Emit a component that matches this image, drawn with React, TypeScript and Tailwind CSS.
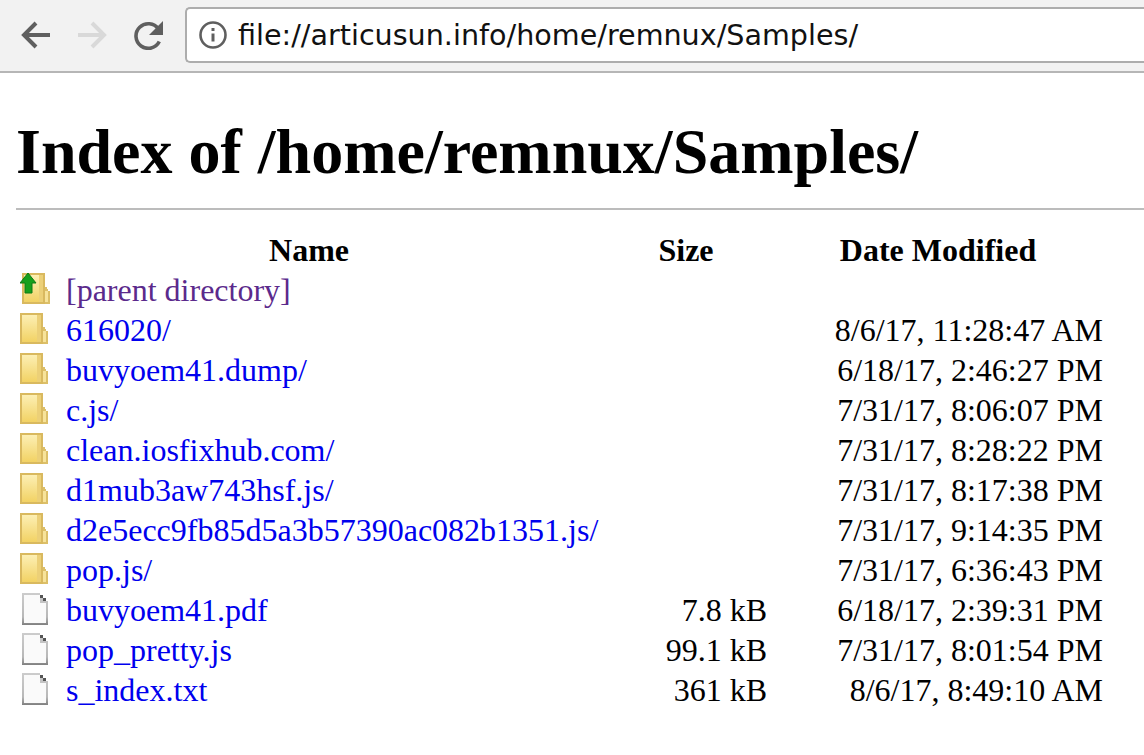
import { Fragment } from "react";

interface FileRow {
  name: string;
  kind: "parent" | "folder" | "file";
  size?: string;
  date?: string;
}

const ROWS: FileRow[] = [
  { name: "[parent directory]", kind: "parent" },
  { name: "616020/", kind: "folder", date: "8/6/17, 11:28:47 AM" },
  { name: "buvyoem41.dump/", kind: "folder", date: "6/18/17, 2:46:27 PM" },
  { name: "c.js/", kind: "folder", date: "7/31/17, 8:06:07 PM" },
  { name: "clean.iosfixhub.com/", kind: "folder", date: "7/31/17, 8:28:22 PM" },
  { name: "d1mub3aw743hsf.js/", kind: "folder", date: "7/31/17, 8:17:38 PM" },
  { name: "d2e5ecc9fb85d5a3b57390ac082b1351.js/", kind: "folder", date: "7/31/17, 9:14:35 PM" },
  { name: "pop.js/", kind: "folder", date: "7/31/17, 6:36:43 PM" },
  { name: "buvyoem41.pdf", kind: "file", size: "7.8 kB", date: "6/18/17, 2:39:31 PM" },
  { name: "pop_pretty.js", kind: "file", size: "99.1 kB", date: "7/31/17, 8:01:54 PM" },
  { name: "s_index.txt", kind: "file", size: "361 kB", date: "8/6/17, 8:49:10 AM" },
];

// shared folder shape, drawn blocky because the source icon is an upscaled 16px bitmap
const FolderShape = () => (
  <g shapeRendering="crispEdges">
    <path d="M0 0h23v31H0z" fill="#d9b95f" />
    <path d="M23 14h2v2h1v2h2v13h-5z" fill="#dcbf68" />
    <path d="M23 18h3v11h-3z" fill="#f7e39a" />
    <path d="M2 2h15v27H2z" fill="url(#folderFill)" />
    <path d="M17 2h4v27h-4z" fill="#ecd078" />
  </g>
);

const FolderFill = () => (
  <defs>
    <linearGradient id="folderFill" x1="0" y1="0" x2="0" y2="1">
      <stop offset="0" stopColor="#fcefb4" />
      <stop offset="1" stopColor="#f2d264" />
    </linearGradient>
  </defs>
);

const FolderIcon = () => (
  <svg width="28" height="31" viewBox="0 0 28 31" className="mb-[3px] shrink-0">
    <FolderFill />
    <FolderShape />
  </svg>
);

const ParentIcon = () => (
  <svg width="30" height="32" viewBox="0 0 30 32" className="mb-[2px] shrink-0">
    <FolderFill />
    <g transform="translate(2 0)">
      <FolderShape />
    </g>
    <path d="M8 0L16 10h-4v10H5V10H0z" fill="#16a01c" stroke="#0e7a14" strokeWidth="1" />
  </svg>
);

const FileIcon = () => (
  <svg width="26" height="32" viewBox="0 0 26 32" className="ml-[2px] mb-[2px] shrink-0" shapeRendering="crispEdges">
    <defs>
      <linearGradient id="pageEdge" x1="0" y1="0" x2="0" y2="1">
        <stop offset="0" stopColor="#cccccc" />
        <stop offset="0.75" stopColor="#b8b8b8" />
        <stop offset="1" stopColor="#808080" />
      </linearGradient>
    </defs>
    <path d="M0 0h18v2h3v3h3v3h2v24H0z" fill="url(#pageEdge)" />
    <path d="M2 2h16v8h6v20H2z" fill="#fafafa" />
    <path d="M18 2h3v3h-3zM21 5h3v3h-3z" fill="#555555" />
    <path d="M18 5h3v3h3v2h-6z" fill="#c4c4c4" />
  </svg>
);

const RowIcon = ({ kind }: { kind: FileRow["kind"] }) => {
  if (kind === "parent") return <ParentIcon />;
  if (kind === "folder") return <FolderIcon />;
  return <FileIcon />;
};

export default function App() {
  return (
    <div className="min-h-[755px] bg-white text-black font-['Liberation_Serif',serif]">
      <div className="flex h-[73px] items-center border-b-2 border-[#b6b6b6] bg-[#f2f2f2]">
        <div className="mb-[1px] flex w-[185px] shrink-0 items-center pl-[21px]">
          <svg width="30" height="30" viewBox="0 0 30 30" fill="none" stroke="#5f5f5f" strokeWidth="4">
            <path d="M29 15H3M15 3L3 15 15 27" />
          </svg>
          <svg width="30" height="30" viewBox="0 0 30 30" fill="none" stroke="#d9d9d9" strokeWidth="4" className="ml-[27px]">
            <path d="M0 15h26M14 3L26 15 14 27" />
          </svg>
          <svg width="30" height="30" viewBox="0 0 30 30" fill="none" className="ml-[25px]">
            <path d="M26.3 21.5a12.3 12.3 0 1 1-.9-12.5" stroke="#5f5f5f" strokeWidth="3.6" />
            <path d="M30 1v14H16z" fill="#5f5f5f" />
          </svg>
        </div>
        <div className="mb-[1px] flex h-[56px] flex-1 items-center rounded-l-[5px] border-2 border-r-0 border-[#adadad] bg-white pl-[11px]">
          <svg width="30" height="30" viewBox="0 0 30 30" fill="none" className="shrink-0">
            <circle cx="15" cy="15" r="12.5" stroke="#5f5f5f" strokeWidth="2.6" />
            <path d="M15 13.5v8" stroke="#5f5f5f" strokeWidth="3" />
            <path d="M15 8v3" stroke="#5f5f5f" strokeWidth="3" />
          </svg>
          <span className="ml-[10px] font-['DejaVu_Sans',sans-serif] text-[28.6px] leading-none text-[#111]">
            file://articusun.info/home/remnux/Samples/
          </span>
        </div>
      </div>

      <div className="pl-4">
        <h1 className="pt-[42px] pb-[19px] text-[64px] leading-[74px] font-bold">Index of /home/remnux/Samples/</h1>
        <hr className="border-t-2 border-[#bcbcbc]" />

        <div className="mt-5 grid grid-cols-[586px_168px_336px] text-[32px] leading-[40px]">
          <div className="text-center font-bold">Name</div>
          <div className="text-center font-bold">Size</div>
          <div className="text-center font-bold">Date Modified</div>

          {ROWS.map((row) => (
            <Fragment key={row.name}>
              <div className="flex h-[40px] items-center pl-[4px]">
                <div className="flex w-[46px] shrink-0 items-center">
                  <RowIcon kind={row.kind} />
                </div>
                <a href="#" className={row.kind === "parent" ? "text-[#5b2a8c]" : "text-[#0000ee]"}>
                  {row.name}
                </a>
              </div>
              <div className="pr-[3px] text-right">{row.size}</div>
              <div className="pr-[3px] text-right">{row.date}</div>
            </Fragment>
          ))}
        </div>
      </div>
    </div>
  );
}
